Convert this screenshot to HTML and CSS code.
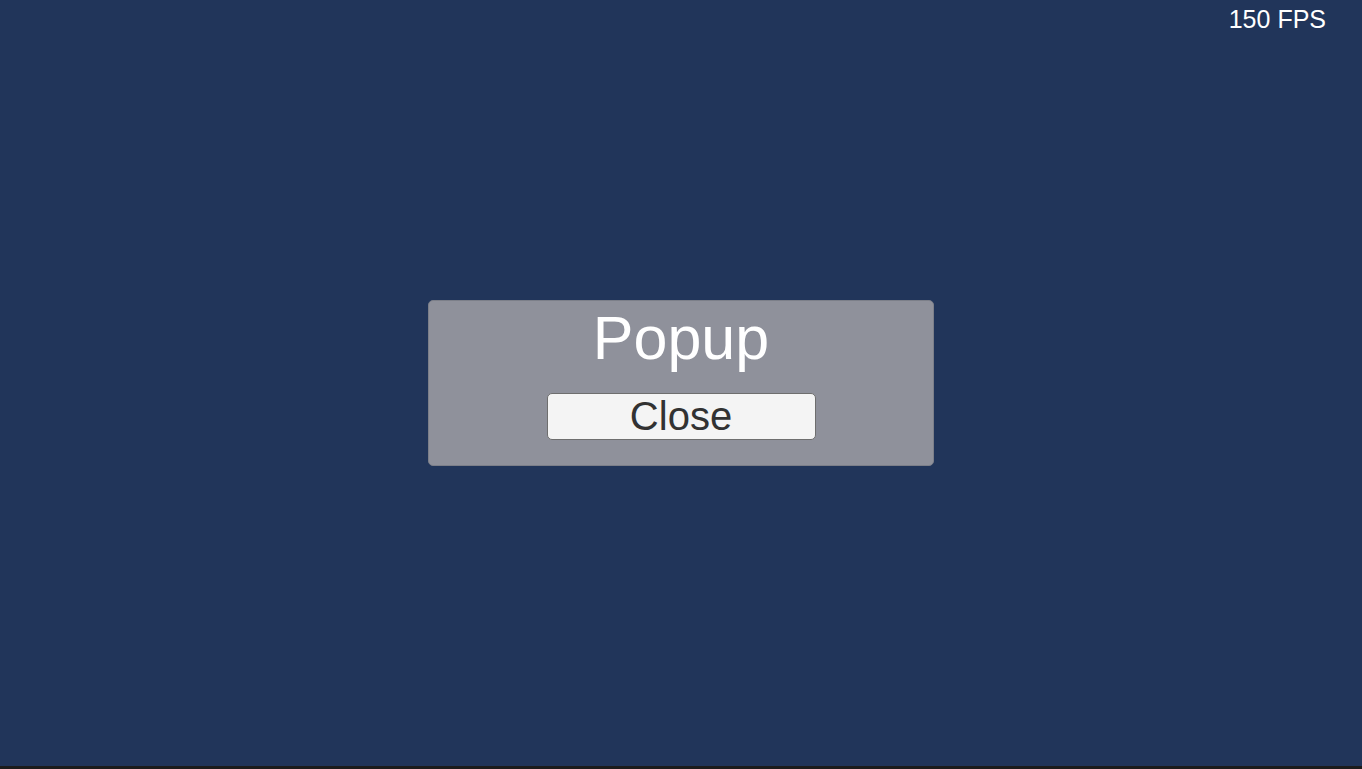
FILE: index.html
```html
<!DOCTYPE html>
<html>
<head>
<meta charset="utf-8">
<link rel="stylesheet" href="styles.css">
</head>
<body>
<div class="screen">
  <div class="fps">150 FPS</div>
  <div class="popup">
    <div class="popup-title">Popup</div>
    <button class="close-btn">Close</button>
  </div>
</div>
<div class="bottom-bar"></div>
</body>
</html>
```

FILE: styles.css
```css
html, body {
  margin: 0;
  padding: 0;
  width: 1362px;
  height: 769px;
  overflow: hidden;
  background: #21355a;
  font-family: "Liberation Sans", Arial, sans-serif;
}

.screen {
  position: relative;
  height: 766px;
  display: flex;
  align-items: center;
  justify-content: center;
  background: #21355a;
}

.fps {
  position: absolute;
  top: 7px;
  right: 36px;
  font-size: 25px;
  line-height: 25px;
  color: #ffffff;
}

.popup {
  box-sizing: border-box;
  width: 506px;
  height: 166px;
  background: #8f919b;
  border: 1px solid #7c7f89;
  border-radius: 5px;
  padding-top: 7px;
  display: flex;
  flex-direction: column;
  align-items: center;
}

.popup-title {
  font-size: 61px;
  line-height: 60px;
  color: #ffffff;
}

.close-btn {
  box-sizing: border-box;
  margin-top: 25px;
  width: 269px;
  height: 47px;
  padding: 0 0 1px 0;
  background: #f4f4f4;
  border: 1px solid #6e6e6e;
  border-radius: 5px;
  font-family: "Liberation Sans", Arial, sans-serif;
  font-size: 40px;
  line-height: 44px;
  color: #323232;
}

.bottom-bar {
  height: 3px;
  background: #1c1c1c;
}
```
